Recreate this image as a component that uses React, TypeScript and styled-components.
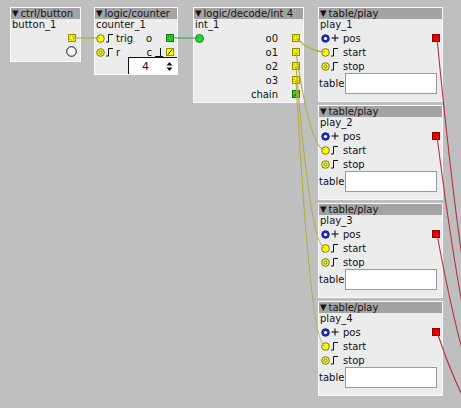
import React from "react";
import styled, { createGlobalStyle } from "styled-components";

const GlobalStyle = createGlobalStyle`
  html, body {
    margin: 0;
    padding: 0;
    background: #bfbfbf;
  }
`;

const Canvas = styled.div`
  position: relative;
  width: 461px;
  height: 408px;
  overflow: hidden;
  background: #bfbfbf;
  font-family: "DejaVu Sans", "Liberation Sans", sans-serif;
  font-size: 10px;
  color: #111;
`;

// objects sit on a free patch canvas, so their place is the content
const Obj = styled.div<{ $x: number; $y: number; $w: number; $h: number }>`
  position: absolute;
  left: ${(p) => p.$x}px;
  top: ${(p) => p.$y}px;
  width: ${(p) => p.$w}px;
  height: ${(p) => p.$h}px;
  box-sizing: border-box;
  background: #ececec;
  border: 1px solid #fafafa;
  display: flex;
  flex-direction: column;
`;

const Title = styled.div`
  height: 11px;
  line-height: 11px;
  background: #a3a3a3;
  padding-left: 1px;
  white-space: nowrap;
  overflow: hidden;
  color: #151515;
`;

const Arrow = styled.span`
  font-size: 8.5px;
  margin-right: 2px;
  vertical-align: 1px;
`;

const Name = styled.div`
  height: 12px;
  line-height: 12px;
  padding-left: 1px;
  white-space: nowrap;
`;

const Body = styled.div`
  display: flex;
  justify-content: space-between;
`;

const Column = styled.div`
  display: flex;
  flex-direction: column;
`;

const Row = styled.div<{ $pad?: number }>`
  height: 14px;
  display: flex;
  align-items: center;
  justify-content: flex-end;
  padding-right: ${(p) => p.$pad ?? 3}px;
  white-space: nowrap;
`;

const InRow = styled.div<{ $pad?: number }>`
  height: 14px;
  display: flex;
  align-items: center;
  padding-left: ${(p) => p.$pad ?? 1}px;
  white-space: nowrap;
  gap: 1px;
`;

const Label = styled.span<{ $ml?: number }>`
  margin-left: ${(p) => p.$ml ?? 0}px;
`;

const Slot = styled.span`
  display: inline-flex;
  width: 8px;
  height: 10px;
  margin: 0 3px;
`;

const ButtonRow = styled.div`
  height: 12px;
  display: flex;
  align-items: center;
  justify-content: flex-end;
  padding-right: 3px;
`;

const NumRow = styled.div`
  display: flex;
  justify-content: flex-end;
  margin-top: -2px;
`;

const NumBox = styled.div`
  width: 49px;
  height: 17px;
  box-sizing: border-box;
  background: #fff;
  border-left: 1px solid #111;
  border-top: 1px solid #111;
  display: flex;
  align-items: center;
  justify-content: space-between;
  padding: 0 4px 0 13px;
  font-size: 11px;
`;

const AttrRow = styled.div`
  display: flex;
  align-items: center;
  height: 20px;
`;

const TextField = styled.div`
  width: 92px;
  height: 21px;
  box-sizing: border-box;
  background: #fff;
  border: 1px solid #9a9a9a;
  margin-left: 1px;
`;

const Wires = styled.svg`
  position: absolute;
  left: 0;
  top: 0;
  pointer-events: none;
`;

type JackKind = "bool" | "boolInt" | "int" | "chain" | "audio";

const jackColors: Record<JackKind, [string, string]> = {
  bool: ["#ffff00", "#8f8f00"],
  boolInt: ["#ffff00", "#8f8f00"],
  int: ["#22dd22", "#137713"],
  chain: ["#22dd22", "#137713"],
  audio: ["#ee0000", "#8a0000"],
};

const Jack = ({ kind }: { kind: JackKind }) => {
  const [fill, line] = jackColors[kind];
  return (
    <svg width="8" height="8" viewBox="0 0 8 8">
      <rect x="0.5" y="0.5" width="7" height="7" fill={fill} stroke={line} />
      {(kind === "bool" || kind === "int") && (
        <rect x="2" y="2" width="4" height="4" fill="none" stroke={line} strokeWidth="0.8" strokeDasharray="1 1" />
      )}
      {(kind === "boolInt" || kind === "chain") && (
        <line x1="2" y1="6.5" x2="6" y2="1.5" stroke="#222" strokeWidth="1" />
      )}
    </svg>
  );
};

type InletKind = "bool" | "boolHollow" | "frac" | "int";

const Inlet = ({ kind }: { kind: InletKind }) => (
  <svg width="9" height="9" viewBox="0 0 9 9">
    {kind === "bool" && <circle cx="4.5" cy="4.5" r="3.8" fill="#ffff00" stroke="#6a6a20" strokeWidth="0.9" />}
    {kind === "boolHollow" && (
      <>
        <circle cx="4.5" cy="4.5" r="3.8" fill="#ffff00" stroke="#6a6a20" strokeWidth="0.9" />
        <circle cx="4.5" cy="4.5" r="1.6" fill="#ececec" stroke="#6a6a20" strokeWidth="0.8" />
      </>
    )}
    {kind === "frac" && (
      <>
        <circle cx="4.5" cy="4.5" r="3.8" fill="#1a2fc8" stroke="#0b1466" strokeWidth="0.8" />
        <circle cx="4.5" cy="4.5" r="1.6" fill="#ffffff" />
      </>
    )}
    {kind === "int" && <circle cx="4.5" cy="4.5" r="4" fill="#22dd22" stroke="#117711" strokeWidth="0.9" />}
  </svg>
);

const Pulse = () => (
  <svg width="7" height="10" viewBox="0 0 7 10">
    <polyline points="0,9 2.5,9 2.5,1.5 7,1.5" fill="none" stroke="#111" strokeWidth="1" />
  </svg>
);

const Plus = () => (
  <svg width="8" height="10" viewBox="0 0 8 10">
    <line x1="0.5" y1="5" x2="7.5" y2="5" stroke="#111" strokeWidth="1.1" />
    <line x1="4" y1="1.5" x2="4" y2="8.5" stroke="#111" strokeWidth="1.1" />
  </svg>
);

const StepDown = () => (
  <svg width="8" height="10" viewBox="0 0 8 10">
    <polyline points="0,9.5 5.5,9.5 5.5,1" fill="none" stroke="#111" strokeWidth="1" />
    <line x1="5.5" y1="9.5" x2="8" y2="9.5" stroke="#111" strokeWidth="1" />
  </svg>
);

const Spinner = () => (
  <svg width="7" height="11" viewBox="0 0 7 11">
    <polygon points="0.5,4.5 6.5,4.5 3.5,1" fill="#111" />
    <polygon points="0.5,6.5 6.5,6.5 3.5,10" fill="#111" />
  </svg>
);

const Header = ({ type, name }: { type: string; name: string }) => (
  <>
    <Title>
      <Arrow>▼</Arrow>
      {type}
    </Title>
    <Name>{name}</Name>
  </>
);

const TablePlay = ({ name, y }: { name: string; y: number }) => (
  <Obj $x={318} $y={y} $w={125} $h={95}>
    <Header type="table/play" name={name} />
    <Body>
      <Column>
        <InRow $pad={2}>
          <Inlet kind="frac" />
          <Plus />
          <Label $ml={3}>pos</Label>
        </InRow>
        <InRow $pad={2}>
          <Inlet kind="bool" />
          <Pulse />
          <Label $ml={4}>start</Label>
        </InRow>
        <InRow $pad={2}>
          <Inlet kind="boolHollow" />
          <Pulse />
          <Label $ml={4}>stop</Label>
        </InRow>
      </Column>
      <Column>
        <Row $pad={2}>
          <Jack kind="audio" />
        </Row>
      </Column>
    </Body>
    <AttrRow>
      <span>table</span>
      <TextField />
    </AttrRow>
  </Obj>
);

type Pt = [number, number];

const net = (a: Pt, b: Pt) => {
  const cx = (a[0] + b[0]) / 2;
  const cy = Math.max(a[1], b[1]);
  return `M${a[0]} ${a[1]} Q${cx} ${cy} ${b[0]} ${b[1]}`;
};

const playTops = [7, 105, 203, 301];

const nets: { a: Pt; b: Pt; color: string }[] = [
  { a: [72.5, 38], b: [100, 38], color: "#b3ab3a" },
  { a: [170, 38], b: [199, 38], color: "#35b035" },
  ...playTops.map((t, i) => ({
    a: [296, 38 + i * 14] as Pt,
    b: [325, t + 45] as Pt,
    color: "#b3ab3a",
  })),
  ...playTops.map((t) => ({
    a: [437, t + 31] as Pt,
    b: [516, 450] as Pt,
    color: "#b23038",
  })),
];

export default function App() {
  return (
    <Canvas>
      <GlobalStyle />

      <Obj $x={10} $y={7} $w={71} $h={55}>
        <Header type="ctrl/button" name="button_1" />
        <Row $pad={4}>
          <Jack kind="bool" />
        </Row>
        <ButtonRow>
          <svg width="11" height="11" viewBox="0 0 11 11">
            <circle cx="5.5" cy="5.5" r="4.8" fill="#f4f4f4" stroke="#111" strokeWidth="1" />
          </svg>
        </ButtonRow>
      </Obj>

      <Obj $x={94} $y={7} $w={84} $h={68}>
        <Header type="logic/counter" name="counter_1" />
        <Body>
          <Column>
            <InRow>
              <Inlet kind="bool" />
              <Pulse />
              <Label $ml={2}>trig</Label>
            </InRow>
            <InRow>
              <Inlet kind="boolHollow" />
              <Pulse />
              <Label $ml={2}>r</Label>
            </InRow>
          </Column>
          <Column>
            <Row>
              <span>o</span>
              <Slot />
              <Jack kind="int" />
            </Row>
            <Row>
              <span>c</span>
              <Slot>
                <StepDown />
              </Slot>
              <Jack kind="boolInt" />
            </Row>
          </Column>
        </Body>
        <NumRow>
          <NumBox>
            <span>4</span>
            <Spinner />
          </NumBox>
        </NumRow>
      </Obj>

      <Obj $x={193} $y={7} $w={111} $h={96}>
        <Header type="logic/decode/int 4" name="int_1" />
        <Body>
          <Column>
            <InRow>
              <Inlet kind="int" />
            </InRow>
          </Column>
          <Column>
            {["o0", "o1", "o2", "o3"].map((o) => (
              <Row key={o}>
                <span>{o}</span>
                <Slot />
                <Jack kind="bool" />
              </Row>
            ))}
            <Row>
              <span>chain</span>
              <Slot />
              <Jack kind="chain" />
            </Row>
          </Column>
        </Body>
      </Obj>

      {playTops.map((t, i) => (
        <TablePlay key={t} y={t} name={`play_${i + 1}`} />
      ))}

      <Wires width={461} height={408}>
        {nets.map((n, i) => (
          <path key={i} d={net(n.a, n.b)} fill="none" stroke={n.color} strokeWidth="1.1" />
        ))}
      </Wires>
    </Canvas>
  );
}
